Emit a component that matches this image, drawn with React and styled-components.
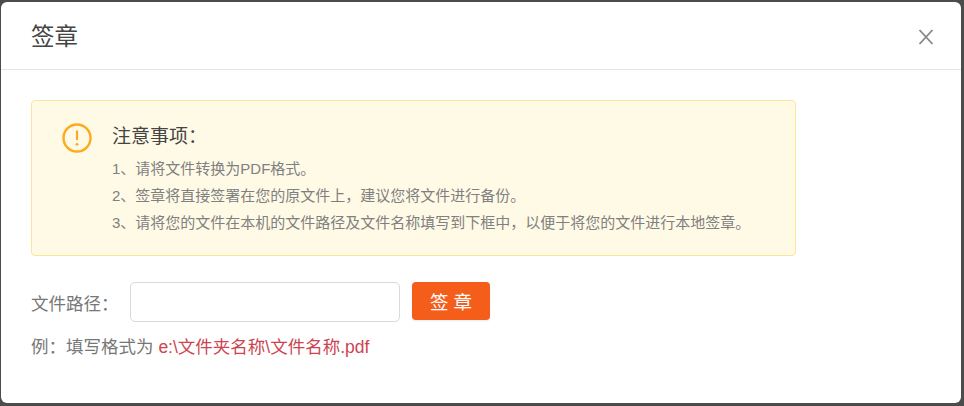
import React from 'react';
import styled, { createGlobalStyle } from 'styled-components';

const GlobalStyle = createGlobalStyle`
  html, body {
    margin: 0;
    padding: 0;
    height: 100%;
    background: #4c4c4c;
    font-family: "Liberation Sans", "Noto Sans CJK SC", sans-serif;
  }
`;

function App() {
  return (
    <>
      <GlobalStyle />
      <Page>
        <Modal>
          <Header>
            <Title>签章</Title>
            <CloseButton aria-label="关闭">
              <svg width="16" height="16" viewBox="0 0 16 16">
                <path d="M1.5 1 L14.5 15 M14.5 1 L1.5 15" stroke="#858585" strokeWidth="1.8" fill="none" />
              </svg>
            </CloseButton>
          </Header>
          <Body>
            <Notice>
              <NoticeIcon viewBox="0 0 30 30">
                <circle cx="15" cy="15" r="13.5" fill="none" stroke="#fdab1a" strokeWidth="2.4" />
                <path d="M15 7.5 V17" stroke="#fdab1a" strokeWidth="2.2" fill="none" />
                <circle cx="15" cy="21.3" r="1.4" fill="#fdab1a" />
              </NoticeIcon>
              <NoticeText>
                <NoticeTitle>注意事项：</NoticeTitle>
                <NoticeLine>1、请将文件转换为PDF格式。</NoticeLine>
                <NoticeLine>2、签章将直接签署在您的原文件上，建议您将文件进行备份。</NoticeLine>
                <NoticeLine>3、请将您的文件在本机的文件路径及文件名称填写到下框中，以便于将您的文件进行本地签章。</NoticeLine>
              </NoticeText>
            </Notice>
            <FormRow>
              <Label>文件路径：</Label>
              <PathInput />
              <SignButton>签 章</SignButton>
            </FormRow>
            <Hint>
              例：填写格式为 <HintPath>e:\文件夹名称\文件名称.pdf</HintPath>
            </Hint>
          </Body>
        </Modal>
      </Page>
    </>
  );
}

const Page = styled.div`
  width: 964px;
  height: 406px;
  padding: 2px 3px 3px 1px;
  box-sizing: border-box;
  overflow: hidden;
`;

const Modal = styled.div`
  height: 100%;
  background: #fff;
  border-radius: 6px;
`;

const Header = styled.div`
  height: 67px;
  padding: 0 27px 0 30px;
  display: flex;
  align-items: center;
  justify-content: space-between;
  border-bottom: 1px solid #e5e5e5;
`;

const Title = styled.div`
  font-size: 23.5px;
  color: #444;
  margin-top: -2px;
`;

const CloseButton = styled.div`
  display: flex;
  margin-top: 3px;
`;

const Body = styled.div`
  padding: 30px 30px 0;
`;

const Notice = styled.div`
  width: 765px;
  height: 156px;
  box-sizing: border-box;
  display: flex;
  gap: 20px;
  padding: 22px 30px 0;
  background: #fffae6;
  border: 1px solid #fde59c;
  border-radius: 4px;
`;

const NoticeIcon = styled.svg`
  width: 30px;
  height: 30px;
  flex: none;
`;

const NoticeText = styled.div`
  display: flex;
  flex-direction: column;
`;

const NoticeTitle = styled.div`
  font-size: 19px;
  line-height: 28px;
  color: #444;
  margin-bottom: 4px;
`;

const NoticeLine = styled.div`
  font-size: 15px;
  line-height: 27px;
  color: #808080;
`;

const FormRow = styled.div`
  display: flex;
  align-items: center;
  margin-top: 26px;
`;

const Label = styled.div`
  width: 99px;
  font-size: 17.5px;
  color: #777;
`;

const PathInput = styled.input`
  width: 270px;
  height: 40px;
  box-sizing: border-box;
  border: 1px solid #d9d9d9;
  border-radius: 5px;
  background: #fff;
  outline: 0;
`;

const SignButton = styled.div`
  width: 78px;
  height: 38px;
  margin-left: 12px;
  margin-top: -2px;
  display: flex;
  align-items: center;
  justify-content: center;
  background: #f45d1a;
  color: #fff;
  font-size: 18.5px;
  border-radius: 4px;
  box-shadow: 0 1px 2px rgba(0, 0, 0, 0.08);
`;

const Hint = styled.div`
  margin-top: 13px;
  font-size: 17.5px;
  line-height: 24px;
  color: #777;
`;

const HintPath = styled.span`
  color: #cc4450;
`;

export default App;
